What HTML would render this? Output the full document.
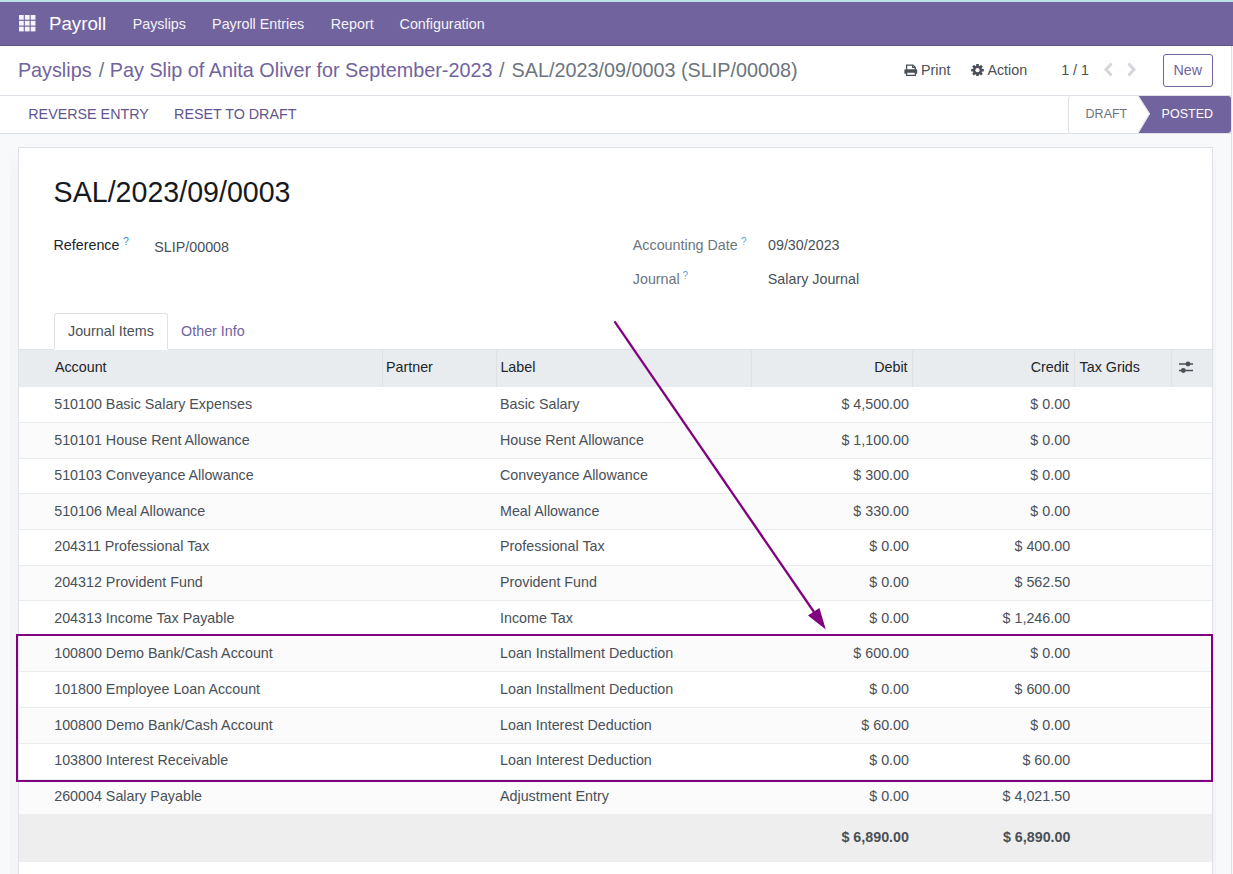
<!DOCTYPE html>
<html><head><meta charset="utf-8"><title>Pay Slip</title>
<style>
html,body{margin:0;padding:0;width:1233px;height:874px;overflow:hidden;position:relative;font-family:'Liberation Sans', sans-serif;}
.t{position:absolute;line-height:20px;white-space:pre;font-family:'Liberation Sans', sans-serif;}
</style></head><body>
<div style="position:absolute;left:0px;top:0px;width:1233px;height:874px;background:#f8f9fa"></div>
<div style="position:absolute;left:0px;top:0px;width:1233px;height:2px;background:#b9e3e6"></div>
<div style="position:absolute;left:0px;top:2px;width:1233px;height:44px;background:#71639e"></div>
<div style="position:absolute;left:0px;top:45px;width:1233px;height:1px;background:#5f5287"></div>
<div style="position:absolute;left:0px;top:46px;width:1233px;height:87px;background:#fff"></div>
<div style="position:absolute;left:0px;top:95px;width:1233px;height:1px;background:#dee2e6"></div>
<div style="position:absolute;left:0px;top:133px;width:1233px;height:1px;background:#dee2e6"></div>
<div style="position:absolute;left:1231px;top:46px;width:1px;height:828px;background:#dee2e6"></div>
<div style="position:absolute;left:1232px;top:46px;width:1px;height:828px;background:#f8f9fa"></div>
<svg style="position:absolute;left:18.7px;top:15.1px" width="17" height="17" viewBox="0 0 17 17"><rect x="0.00" y="0.00" width="4.75" height="4.7" fill="#f3f3f8"/><rect x="5.85" y="0.00" width="4.75" height="4.7" fill="#f3f3f8"/><rect x="11.70" y="0.00" width="4.75" height="4.7" fill="#f3f3f8"/><rect x="0.00" y="5.85" width="4.75" height="4.7" fill="#f3f3f8"/><rect x="5.85" y="5.85" width="4.75" height="4.7" fill="#f3f3f8"/><rect x="11.70" y="5.85" width="4.75" height="4.7" fill="#f3f3f8"/><rect x="0.00" y="11.70" width="4.75" height="4.7" fill="#f3f3f8"/><rect x="5.85" y="11.70" width="4.75" height="4.7" fill="#f3f3f8"/><rect x="11.70" y="11.70" width="4.75" height="4.7" fill="#f3f3f8"/></svg>
<div class="t" style="left:49.00px;top:13.60px;font-size:18.7px;color:#fff;font-weight:400;">Payroll</div>
<div class="t" style="left:132.70px;top:13.80px;font-size:14.3px;color:#f4f3f8;font-weight:400;">Payslips</div>
<div class="t" style="left:212.10px;top:13.80px;font-size:14.3px;color:#f4f3f8;font-weight:400;">Payroll Entries</div>
<div class="t" style="left:330.80px;top:13.80px;font-size:14.3px;color:#f4f3f8;font-weight:400;">Report</div>
<div class="t" style="left:399.60px;top:13.80px;font-size:14.3px;color:#f4f3f8;font-weight:400;">Configuration</div>
<div class="t" style="left:17.90px;top:59.60px;font-size:19.8px;color:#71639e;font-weight:400;">Payslips</div>
<div class="t" style="left:98.80px;top:59.60px;font-size:19.8px;color:#6c757d;font-weight:400;">/</div>
<div class="t" style="left:109.80px;top:59.60px;font-size:19.8px;color:#71639e;font-weight:400;">Pay Slip of Anita Oliver for September-2023</div>
<div class="t" style="left:498.90px;top:59.60px;font-size:19.8px;color:#6c757d;font-weight:400;">/</div>
<div class="t" style="left:511.60px;top:59.60px;font-size:19.8px;color:#6c757d;font-weight:400;">SAL/2023/09/0003 (SLIP/00008)</div>
<svg style="position:absolute;left:903.5px;top:63.6px" width="14" height="12.4" viewBox="0 0 14 13" preserveAspectRatio="none"><path d="M2.6 6V1.1h6.3l2.4 2.3V6" fill="none" stroke="#495057" stroke-width="1.3"/><path d="M8.6 1v2.6h2.7" fill="none" stroke="#495057" stroke-width="1.1"/><path d="M1.3 5.6h10.9a1 1 0 0 1 1 1v3.7h-1.9V8.4H2.6v1.9H0.4V6.6a1 1 0 0 1 .9-1z" fill="#495057"/><path d="M2.6 8.4h8.7v3.6H2.6z" fill="#fff" stroke="#495057" stroke-width="1.3"/></svg>
<div class="t" style="left:921.00px;top:60.20px;font-size:14.3px;color:#495057;font-weight:400;">Print</div>
<svg style="position:absolute;left:971.2px;top:63.6px" width="13" height="12.4" viewBox="-6.5 -6.2 13 12.4"><g fill="#495057"><circle r="4.6"/><rect x="-1.3" y="-6.3" width="2.6" height="3" transform="rotate(0)"/><rect x="-1.3" y="-6.3" width="2.6" height="3" transform="rotate(45)"/><rect x="-1.3" y="-6.3" width="2.6" height="3" transform="rotate(90)"/><rect x="-1.3" y="-6.3" width="2.6" height="3" transform="rotate(135)"/><rect x="-1.3" y="-6.3" width="2.6" height="3" transform="rotate(180)"/><rect x="-1.3" y="-6.3" width="2.6" height="3" transform="rotate(225)"/><rect x="-1.3" y="-6.3" width="2.6" height="3" transform="rotate(270)"/><rect x="-1.3" y="-6.3" width="2.6" height="3" transform="rotate(315)"/></g><circle r="2.1" fill="#fff"/></svg>
<div class="t" style="left:987.40px;top:60.20px;font-size:14.3px;color:#495057;font-weight:400;">Action</div>
<div class="t" style="left:1061.20px;top:60.20px;font-size:14.3px;color:#495057;font-weight:400;">1 / 1</div>
<svg style="position:absolute;left:1103px;top:62px" width="36" height="15" viewBox="0 0 36 15"><path d="M8.5 1.5L3 7.5l5.5 6" stroke="#d4d6da" stroke-width="2.9" fill="none"/><path d="M25.5 1.5L31 7.5l-5.5 6" stroke="#d4d6da" stroke-width="2.9" fill="none"/></svg>
<div style="position:absolute;left:1163px;top:54px;width:50px;height:32.5px;box-sizing:border-box;border:1px solid #71639e;border-radius:3px;background:#fff"></div>
<div class="t" style="left:1173.50px;top:60.00px;font-size:14.3px;color:#71639e;font-weight:400;">New</div>
<div class="t" style="left:28.30px;top:104.00px;font-size:14.3px;color:#5f5590;font-weight:400;">REVERSE ENTRY</div>
<div class="t" style="left:174.10px;top:104.00px;font-size:14.3px;color:#5f5590;font-weight:400;">RESET TO DRAFT</div>
<svg style="position:absolute;left:1068px;top:95px" width="165" height="39" viewBox="0 0 165 39">
<path d="M3.5 0.5H160 a3 3 0 0 1 3 3 V35.5 a3 3 0 0 1 -3 3 H3.5 a3 3 0 0 1 -3 -3 V3.5 a3 3 0 0 1 3 -3z" fill="#fff" stroke="#dee2e6" stroke-width="1"/>
<path d="M70.3 1H160 a3 3 0 0 1 3 3 V34.5 a3.5 3.5 0 0 1 -3.5 3.5 H70.3 L82 18.8 Z" fill="#71639e"/>
<path d="M70 0.8 L81.3 18.8 L70 38" fill="none" stroke="#e2e4e8" stroke-width="1.2"/>
</svg>
<div class="t" style="left:1085.60px;top:103.80px;font-size:12.5px;color:#6c757d;font-weight:400;">DRAFT</div>
<div class="t" style="left:1161.60px;top:103.80px;font-size:12.5px;color:#fff;font-weight:400;">POSTED</div>
<div style="position:absolute;left:10px;top:150px;width:8px;height:724px;background:linear-gradient(#f8f9fa, #f4f5f6 25px)"></div>
<div style="position:absolute;left:1213px;top:150px;width:3px;height:724px;background:linear-gradient(#f8f9fa, #f3f4f5 25px)"></div>
<div style="position:absolute;left:18px;top:147px;width:1195px;height:740px;box-sizing:border-box;background:#fff;border:1px solid #dee2e6"></div>
<div class="t" style="left:53.60px;top:182.00px;font-size:28.6px;color:#16191d;font-weight:400;">SAL/2023/09/0003</div>
<div class="t" style="left:53.50px;top:235.00px;font-size:14.3px;color:#212529;font-weight:400;">Reference</div>
<div class="t" style="left:123.20px;top:231.50px;font-size:10px;color:#2f7fce;font-weight:400;">?</div>
<div class="t" style="left:154.30px;top:236.70px;font-size:14.3px;color:#495057;font-weight:400;">SLIP/00008</div>
<div class="t" style="left:632.80px;top:234.60px;font-size:14.3px;color:#6c757d;font-weight:400;">Accounting Date</div>
<div class="t" style="left:741.10px;top:232.00px;font-size:10px;color:#5c9fd6;font-weight:400;">?</div>
<div class="t" style="left:768.00px;top:234.80px;font-size:14.3px;color:#495057;font-weight:400;">09/30/2023</div>
<div class="t" style="left:632.80px;top:269.00px;font-size:14.3px;color:#6c757d;font-weight:400;">Journal</div>
<div class="t" style="left:682.60px;top:265.50px;font-size:10px;color:#5c9fd6;font-weight:400;">?</div>
<div class="t" style="left:767.80px;top:269.00px;font-size:14.3px;color:#495057;font-weight:400;">Salary Journal</div>
<div style="position:absolute;left:54px;top:313px;width:114px;height:37px;box-sizing:border-box;background:#fff;border:1px solid #dee2e6;border-bottom:none;border-radius:3px 3px 0 0"></div>
<div class="t" style="left:68.00px;top:321.00px;font-size:14.3px;color:#495057;font-weight:400;">Journal Items</div>
<div class="t" style="left:181.10px;top:321.00px;font-size:14.3px;color:#71639e;font-weight:400;">Other Info</div>
<div style="position:absolute;left:19px;top:349px;width:1193px;height:37.5px;background:#e9ecef;border-top:1px solid #dee2e6;box-sizing:border-box"></div>
<div style="position:absolute;left:54px;top:349px;width:114px;height:1px;background:#fff"></div>
<div style="position:absolute;left:382px;top:350px;width:1px;height:36.5px;background:#dee2e6"></div>
<div style="position:absolute;left:496px;top:350px;width:1px;height:36.5px;background:#dee2e6"></div>
<div style="position:absolute;left:751px;top:350px;width:1px;height:36.5px;background:#dee2e6"></div>
<div style="position:absolute;left:912px;top:350px;width:1px;height:36.5px;background:#dee2e6"></div>
<div style="position:absolute;left:1074px;top:350px;width:1px;height:36.5px;background:#dee2e6"></div>
<div style="position:absolute;left:1171px;top:350px;width:1px;height:36.5px;background:#dee2e6"></div>
<div class="t" style="left:54.90px;top:356.70px;font-size:14.3px;color:#212529;font-weight:400;">Account</div>
<div class="t" style="left:386.00px;top:356.70px;font-size:14.3px;color:#212529;font-weight:400;">Partner</div>
<div class="t" style="left:500.40px;top:356.70px;font-size:14.3px;color:#212529;font-weight:400;">Label</div>
<div class="t" style="right:325.40px;top:356.70px;font-size:14.3px;color:#212529;font-weight:400;">Debit</div>
<div class="t" style="right:164.20px;top:356.70px;font-size:14.3px;color:#212529;font-weight:400;">Credit</div>
<div class="t" style="left:1079.60px;top:356.70px;font-size:14.3px;color:#212529;font-weight:400;">Tax Grids</div>
<svg style="position:absolute;left:1178px;top:360px" width="16" height="14" viewBox="0 0 16 14"><path d="M1 4h14M1 10.5h14" stroke="#495057" stroke-width="1.3"/><circle cx="10" cy="4" r="2.4" fill="#495057"/><circle cx="5.3" cy="10.5" r="2.4" fill="#495057"/></svg>
<div style="position:absolute;left:19px;top:386.5px;width:1193px;height:35.5px;background:#fff;border-top:1px solid #fff;box-sizing:border-box"></div>
<div class="t" style="left:54.20px;top:393.72px;font-size:14.3px;color:#495057;font-weight:400;">510100 Basic Salary Expenses</div>
<div class="t" style="left:500.00px;top:393.72px;font-size:14.3px;color:#495057;font-weight:400;">Basic Salary</div>
<div class="t" style="right:324.00px;top:393.72px;font-size:14.3px;color:#495057;font-weight:400;">$ 4,500.00</div>
<div class="t" style="right:162.90px;top:393.72px;font-size:14.3px;color:#495057;font-weight:400;">$ 0.00</div>
<div style="position:absolute;left:19px;top:422px;width:1193px;height:36px;background:#fbfbfc;border-top:1px solid #e9ecef;box-sizing:border-box"></div>
<div class="t" style="left:54.20px;top:430.07px;font-size:14.3px;color:#495057;font-weight:400;">510101 House Rent Allowance</div>
<div class="t" style="left:500.00px;top:430.07px;font-size:14.3px;color:#495057;font-weight:400;">House Rent Allowance</div>
<div class="t" style="right:324.00px;top:430.07px;font-size:14.3px;color:#495057;font-weight:400;">$ 1,100.00</div>
<div class="t" style="right:162.90px;top:430.07px;font-size:14.3px;color:#495057;font-weight:400;">$ 0.00</div>
<div style="position:absolute;left:19px;top:458px;width:1193px;height:35px;background:#fff;border-top:1px solid #e9ecef;box-sizing:border-box"></div>
<div class="t" style="left:54.20px;top:465.02px;font-size:14.3px;color:#495057;font-weight:400;">510103 Conveyance Allowance</div>
<div class="t" style="left:500.00px;top:465.02px;font-size:14.3px;color:#495057;font-weight:400;">Conveyance Allowance</div>
<div class="t" style="right:324.00px;top:465.02px;font-size:14.3px;color:#495057;font-weight:400;">$ 300.00</div>
<div class="t" style="right:162.90px;top:465.02px;font-size:14.3px;color:#495057;font-weight:400;">$ 0.00</div>
<div style="position:absolute;left:19px;top:493px;width:1193px;height:36px;background:#fbfbfc;border-top:1px solid #e9ecef;box-sizing:border-box"></div>
<div class="t" style="left:54.20px;top:500.67px;font-size:14.3px;color:#495057;font-weight:400;">510106 Meal Allowance</div>
<div class="t" style="left:500.00px;top:500.67px;font-size:14.3px;color:#495057;font-weight:400;">Meal Allowance</div>
<div class="t" style="right:324.00px;top:500.67px;font-size:14.3px;color:#495057;font-weight:400;">$ 330.00</div>
<div class="t" style="right:162.90px;top:500.67px;font-size:14.3px;color:#495057;font-weight:400;">$ 0.00</div>
<div style="position:absolute;left:19px;top:529px;width:1193px;height:36px;background:#fff;border-top:1px solid #e9ecef;box-sizing:border-box"></div>
<div class="t" style="left:54.20px;top:536.33px;font-size:14.3px;color:#495057;font-weight:400;">204311 Professional Tax</div>
<div class="t" style="left:500.00px;top:536.33px;font-size:14.3px;color:#495057;font-weight:400;">Professional Tax</div>
<div class="t" style="right:324.00px;top:536.33px;font-size:14.3px;color:#495057;font-weight:400;">$ 0.00</div>
<div class="t" style="right:162.90px;top:536.33px;font-size:14.3px;color:#495057;font-weight:400;">$ 400.00</div>
<div style="position:absolute;left:19px;top:565px;width:1193px;height:35px;background:#fbfbfc;border-top:1px solid #e9ecef;box-sizing:border-box"></div>
<div class="t" style="left:54.20px;top:571.98px;font-size:14.3px;color:#495057;font-weight:400;">204312 Provident Fund</div>
<div class="t" style="left:500.00px;top:571.98px;font-size:14.3px;color:#495057;font-weight:400;">Provident Fund</div>
<div class="t" style="right:324.00px;top:571.98px;font-size:14.3px;color:#495057;font-weight:400;">$ 0.00</div>
<div class="t" style="right:162.90px;top:571.98px;font-size:14.3px;color:#495057;font-weight:400;">$ 562.50</div>
<div style="position:absolute;left:19px;top:600px;width:1193px;height:36px;background:#fff;border-top:1px solid #e9ecef;box-sizing:border-box"></div>
<div class="t" style="left:54.20px;top:607.62px;font-size:14.3px;color:#495057;font-weight:400;">204313 Income Tax Payable</div>
<div class="t" style="left:500.00px;top:607.62px;font-size:14.3px;color:#495057;font-weight:400;">Income Tax</div>
<div class="t" style="right:324.00px;top:607.62px;font-size:14.3px;color:#495057;font-weight:400;">$ 0.00</div>
<div class="t" style="right:162.90px;top:607.62px;font-size:14.3px;color:#495057;font-weight:400;">$ 1,246.00</div>
<div style="position:absolute;left:19px;top:636px;width:1193px;height:35px;background:#fbfbfc;border-top:1px solid #fbfbfc;box-sizing:border-box"></div>
<div class="t" style="left:54.20px;top:643.27px;font-size:14.3px;color:#495057;font-weight:400;">100800 Demo Bank/Cash Account</div>
<div class="t" style="left:500.00px;top:643.27px;font-size:14.3px;color:#495057;font-weight:400;">Loan Installment Deduction</div>
<div class="t" style="right:324.00px;top:643.27px;font-size:14.3px;color:#495057;font-weight:400;">$ 600.00</div>
<div class="t" style="right:162.90px;top:643.27px;font-size:14.3px;color:#495057;font-weight:400;">$ 0.00</div>
<div style="position:absolute;left:19px;top:671px;width:1193px;height:36px;background:#fff;border-top:1px solid #e9ecef;box-sizing:border-box"></div>
<div class="t" style="left:54.20px;top:678.93px;font-size:14.3px;color:#495057;font-weight:400;">101800 Employee Loan Account</div>
<div class="t" style="left:500.00px;top:678.93px;font-size:14.3px;color:#495057;font-weight:400;">Loan Installment Deduction</div>
<div class="t" style="right:324.00px;top:678.93px;font-size:14.3px;color:#495057;font-weight:400;">$ 0.00</div>
<div class="t" style="right:162.90px;top:678.93px;font-size:14.3px;color:#495057;font-weight:400;">$ 600.00</div>
<div style="position:absolute;left:19px;top:707px;width:1193px;height:36px;background:#fbfbfc;border-top:1px solid #e9ecef;box-sizing:border-box"></div>
<div class="t" style="left:54.20px;top:714.57px;font-size:14.3px;color:#495057;font-weight:400;">100800 Demo Bank/Cash Account</div>
<div class="t" style="left:500.00px;top:714.57px;font-size:14.3px;color:#495057;font-weight:400;">Loan Interest Deduction</div>
<div class="t" style="right:324.00px;top:714.57px;font-size:14.3px;color:#495057;font-weight:400;">$ 60.00</div>
<div class="t" style="right:162.90px;top:714.57px;font-size:14.3px;color:#495057;font-weight:400;">$ 0.00</div>
<div style="position:absolute;left:19px;top:743px;width:1193px;height:36px;background:#fff;border-top:1px solid #e9ecef;box-sizing:border-box"></div>
<div class="t" style="left:54.20px;top:750.23px;font-size:14.3px;color:#495057;font-weight:400;">103800 Interest Receivable</div>
<div class="t" style="left:500.00px;top:750.23px;font-size:14.3px;color:#495057;font-weight:400;">Loan Interest Deduction</div>
<div class="t" style="right:324.00px;top:750.23px;font-size:14.3px;color:#495057;font-weight:400;">$ 0.00</div>
<div class="t" style="right:162.90px;top:750.23px;font-size:14.3px;color:#495057;font-weight:400;">$ 60.00</div>
<div style="position:absolute;left:19px;top:779px;width:1193px;height:35px;background:#fbfbfc;border-top:1px solid #e9ecef;box-sizing:border-box"></div>
<div class="t" style="left:54.20px;top:785.88px;font-size:14.3px;color:#495057;font-weight:400;">260004 Salary Payable</div>
<div class="t" style="left:500.00px;top:785.88px;font-size:14.3px;color:#495057;font-weight:400;">Adjustment Entry</div>
<div class="t" style="right:324.00px;top:785.88px;font-size:14.3px;color:#495057;font-weight:400;">$ 0.00</div>
<div class="t" style="right:162.90px;top:785.88px;font-size:14.3px;color:#495057;font-weight:400;">$ 4,021.50</div>
<div style="position:absolute;left:19px;top:814.30px;width:1193px;height:47.7px;background:#eeeeee"></div>
<div class="t" style="right:324.00px;top:826.80px;font-size:14.3px;color:#495057;font-weight:700;">$ 6,890.00</div>
<div class="t" style="right:162.50px;top:826.80px;font-size:14.3px;color:#495057;font-weight:700;">$ 6,890.00</div>
<div style="position:absolute;left:19px;top:862px;width:1193px;height:12px;background:#fff"></div>
<div style="position:absolute;left:16px;top:634px;width:1197px;height:148px;box-sizing:border-box;border:2px solid #800080"></div>
<svg style="position:absolute;left:0;top:0" width="1233" height="874"><line x1="614.5" y1="321.3" x2="814" y2="612" stroke="#800080" stroke-width="2.3"/><path d="M825.8 629.5 L808 615.6 L819.4 608 Z" fill="#800080"/></svg>
</body></html>
